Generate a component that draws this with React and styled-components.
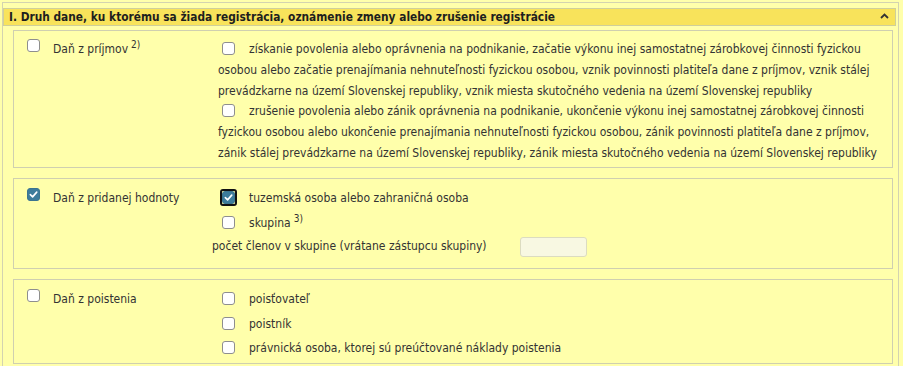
import React from 'react';
import styled, { createGlobalStyle } from 'styled-components';

const GlobalStyle = createGlobalStyle`
  html, body {
    margin: 0;
    padding: 0;
    background: #ffffab;
  }
  body {
    font-family: "DejaVu Sans Condensed", "DejaVu Sans", sans-serif;
    font-size: 12px;
    color: #333;
  }
`;

const Frame = styled.div`
  box-sizing: border-box;
  width: 897px;
  height: 366px;
  margin: 2px 0 0 2px;
  border: 1px solid #d3d3b0;
  border-bottom: none;
  padding: 5px 2px 0 0;
`;

const Header = styled.div`
  display: flex;
  align-items: center;
  justify-content: space-between;
  height: 16px;
  border: 1px solid #cfcf9a;
  background: #f8e35b;
  padding: 0 6px 0 5px;
  font-weight: bold;
  font-size: 11.8px;
  color: #1e1e1e;
`;

const Caret = styled.svg`
  width: 9px;
  height: 6px;
  margin-top: -2px;
`;

const Card = styled.div`
  display: grid;
  grid-template-columns: 204px 1fr;
  margin: ${p => p.$top}px 3px 0 10px;
  height: ${p => p.$h}px;
  box-sizing: border-box;
  border: 1px solid #cfcfb0;
  padding: ${p => p.$pad};
`;

const Main = styled.div`
  display: flex;
  align-items: flex-start;
  gap: 13px;
  padding-left: 13px;
  line-height: 21px;
`;

const Options = styled.div`
  display: flex;
  flex-direction: column;
  gap: ${p => p.$gap}px;
  line-height: ${p => p.$lh}px;
`;

const Option = styled.div`
  position: relative;
`;

const Sup = styled.sup`
  font-size: 10px;
  vertical-align: 5px;
  line-height: 0;
  margin-left: 3px;
`;

const BoxWrap = styled.span`
  display: inline-block;
  vertical-align: -2px;
  margin: 0 ${p => p.$right}px 0 ${p => p.$left}px;
  position: relative;
`;

const Box = styled.span`
  display: block;
  box-sizing: border-box;
  width: 13px;
  height: 13px;
  border-radius: 3px;
  border: 1px solid ${p => (p.$checked ? '#3b7490' : '#8e8e8e')};
  background: ${p => (p.$checked ? '#3d7c9b' : '#fff')};
  box-shadow: ${p => (p.$checked ? 'none' : 'inset 0 0 0 1px #fff')};
  position: relative;
  &::after {
    content: '';
    display: ${p => (p.$focus ? 'block' : 'none')};
    position: absolute;
    inset: -3px;
    border: 2px solid #111;
    border-radius: 3px;
  }
`;

const Check = styled.svg`
  position: absolute;
  left: 1px;
  top: 1px;
  width: 9px;
  height: 9px;
`;

const CountRow = styled.div`
  display: flex;
  align-items: center;
  gap: 33px;
  margin-left: -6px;
  margin-top: -2px;
`;

const CountInput = styled.span`
  display: block;
  width: 67px;
  height: 20px;
  box-sizing: border-box;
  border: 1px solid #dcdcc0;
  border-radius: 3px;
  background: #f8f8e2;
`;

function Checkbox({ checked, focus, left = 0, right = 0 }) {
  return (
    <BoxWrap $left={left} $right={right}>
      <Box $checked={checked} $focus={focus}>
        {checked && (
          <Check viewBox="0 0 10 10">
            <path d="M1.5 5.2 L4 7.6 L8.6 2.4" fill="none" stroke="#fff" strokeWidth="1.8" strokeLinecap="round" strokeLinejoin="round" />
          </Check>
        )}
      </Box>
    </BoxWrap>
  );
}

function Lines({ lines }) {
  return lines.map((l, i) => (
    <React.Fragment key={i}>
      {i > 0 && <br />}
      {l}
    </React.Fragment>
  ));
}

export default function App() {
  return (
    <>
      <GlobalStyle />
      <Frame>
        <Header>
          <span>I. Druh dane, ku ktorému sa žiada registrácia, oznámenie zmeny alebo zrušenie registrácie</span>
          <Caret viewBox="0 0 9 6">
            <path d="M1 5 L4.5 1.5 L8 5" fill="none" stroke="#333" strokeWidth="1.8" />
          </Caret>
        </Header>

        <Card $top={4} $h={138} $pad="8px 0 0 0">
          <Main>
            <Checkbox />
            <span>Daň z príjmov<Sup>2)</Sup></span>
          </Main>
          <Options $gap={0} $lh={20.8}>
            <Option>
              <Checkbox left={4} right={14} />
              <Lines lines={[
                'získanie povolenia alebo oprávnenia na podnikanie, začatie výkonu inej samostatnej zárobkovej činnosti fyzickou',
                'osobou alebo začatie prenajímania nehnuteľnosti fyzickou osobou, vznik povinnosti platiteľa dane z príjmov, vznik stálej',
                'prevádzkarne na území Slovenskej republiky, vznik miesta skutočného vedenia na území Slovenskej republiky',
              ]} />
            </Option>
            <Option>
              <Checkbox left={4} right={14} />
              <Lines lines={[
                'zrušenie povolenia alebo zánik oprávnenia na podnikanie, ukončenie výkonu inej samostatnej zárobkovej činnosti',
                'fyzickou osobou alebo ukončenie prenajímania nehnuteľnosti fyzickou osobou, zánik povinnosti platiteľa dane z príjmov,',
                'zánik stálej prevádzkarne na území Slovenskej republiky, zánik miesta skutočného vedenia na území Slovenskej republiky',
              ]} />
            </Option>
          </Options>
        </Card>

        <Card $top={10} $h={91} $pad="9px 0 0 0">
          <Main>
            <Checkbox checked />
            <span>Daň z pridanej hodnoty</span>
          </Main>
          <Options $gap={4} $lh={21}>
            <Option>
              <Checkbox checked focus left={4} right={14} />
              tuzemská osoba alebo zahraničná osoba
            </Option>
            <Option>
              <Checkbox left={4} right={14} />
              skupina<Sup>3)</Sup>
            </Option>
            <CountRow>
              <span>počet členov v skupine (vrátane zástupcu skupiny)</span>
              <CountInput />
            </CountRow>
          </Options>
        </Card>

        <Card $top={10} $h={85} $pad="9px 0 0 0">
          <Main>
            <Checkbox />
            <span>Daň z poistenia</span>
          </Main>
          <Options $gap={3.5} $lh={21}>
            <Option>
              <Checkbox left={4} right={14} />
              poisťovateľ
            </Option>
            <Option>
              <Checkbox left={4} right={14} />
              poistník
            </Option>
            <Option>
              <Checkbox left={4} right={14} />
              právnická osoba, ktorej sú preúčtované náklady poistenia
            </Option>
          </Options>
        </Card>
      </Frame>
    </>
  );
}
